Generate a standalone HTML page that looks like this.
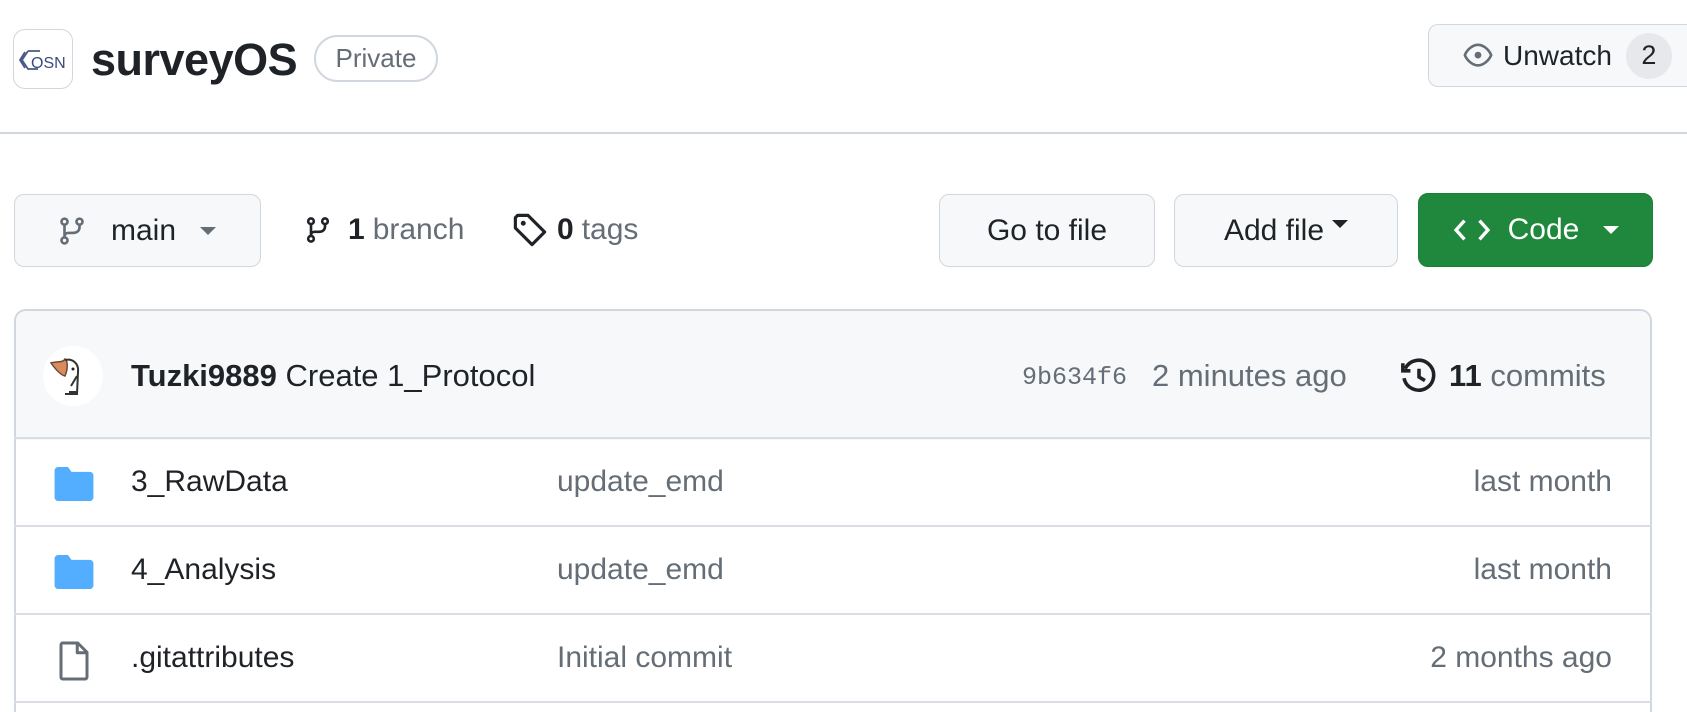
<!DOCTYPE html>
<html style="height:712px;overflow:hidden"><head><meta charset="utf-8"><style>
*{box-sizing:border-box;margin:0;padding:0}
body{width:1687px;height:712px;overflow:hidden;background:#fff;font-family:"Liberation Sans",sans-serif;color:#1f2328;position:relative}
.a{position:absolute}
.btn{position:absolute;border:1px solid #d0d7de;background:#f6f8fa;border-radius:10px;display:flex;align-items:center;font-size:29px;color:#1f2328}
.muted{color:#656d76}
.row{position:absolute;left:14px;width:1638px;height:88px;border-top:2px solid #d8dee4;font-size:29px}
.row span{position:absolute;top:50%;transform:translateY(-50%)}
.caret{display:inline-block;width:0;height:0;border-left:8px solid transparent;border-right:8px solid transparent;border-top:8px solid currentColor}
</style></head><body>
<div class="a" style="left:13px;top:29px;width:60px;height:60px;border:1px solid #d0d7de;border-radius:12px;background:#fff;overflow:hidden">
<svg width="60" height="60" viewBox="0 0 60 60"><path d="M14 21 L8 30 L14 39 L24 39 M14 21 L26 21 M11 22 L6 30 L11 38" fill="none" stroke="#4a5a8a" stroke-width="1.8"/><text x="17" y="38" font-family="Liberation Sans" font-size="16" fill="#3b4a7a">OSN</text></svg></div>
<div class="a" style="left:91px;top:34px;font-size:45px;font-weight:bold;letter-spacing:-0.5px">surveyOS</div>
<div class="a" style="left:314px;top:35px;width:124px;height:47px;border:2px solid #d0d7de;border-radius:24px;font-size:26px;color:#656d76;display:flex;align-items:center;justify-content:center">Private</div>
<div class="btn" style="left:1428px;top:24px;width:259px;height:63px;padding-left:30px;border-right:none;border-radius:10px 0 0 10px">
<svg width="38" height="30" viewBox="0 0 16 16"><path d="M8 2c1.98 0 3.6 1.07 4.8 2.23C13.9 5.36 14.7 6.6 15 7.5c-.3.9-1.1 2.14-2.2 3.27C11.6 11.930 9.98 13 8 13s-3.6-1.07-4.8-2.23C2.1 9.64 1.3 8.4 1 7.5c.3-.9 1.1-2.14 2.2-3.27C4.4 3.07 6.02 2 8 2Z" fill="none" stroke="#656d76" stroke-width="1.4"/><circle cx="8" cy="7.5" r="1.8" fill="#656d76"/></svg>
<span style="margin-left:6px;font-size:28px">Unwatch</span>
<span style="margin-left:14px;width:46px;height:46px;border-radius:23px;background:#e6e8eb;display:flex;align-items:center;justify-content:center;font-size:27px">2</span></div>
<div class="a" style="left:0;top:132px;width:1687px;height:2px;background:#d0d7de"></div>
<div class="btn" style="left:14px;top:194px;width:247px;height:73px;padding-left:42px">
<svg width="30" height="36" viewBox="0 0 16 16"><g fill="none" stroke="#656d76" stroke-width="1.4"><circle cx="4" cy="3" r="1.6"/><circle cx="4" cy="13" r="1.6"/><circle cx="12" cy="3" r="1.6"/><path d="M4 4.6v6.8M12 4.6v1.4c0 2-1.5 3-3.5 3H6c-1.2 0-2 .8-2 2"/></g></svg>
<span style="margin-left:24px;font-size:30px">main</span><span class="caret" style="margin-left:24px;color:#656d76"></span></div>
<div class="a" style="left:304px;top:212px;display:flex;align-items:center;font-size:30px">
<svg width="28" height="36" viewBox="0 0 16 16"><g fill="none" stroke="#1f2328" stroke-width="1.5"><circle cx="4" cy="3" r="1.6"/><circle cx="4" cy="13" r="1.6"/><circle cx="12" cy="3" r="1.6"/><path d="M4 4.6v6.8M12 4.6v1.4c0 2-1.5 3-3.5 3H6c-1.2 0-2 .8-2 2"/></g></svg>
<b style="margin-left:16px">1</b><span class="muted" style="margin-left:8px">branch</span></div>
<div class="a" style="left:512px;top:212px;display:flex;align-items:center;font-size:30px">
<svg width="36" height="36" viewBox="0 0 16 16"><path d="M1.5 2.5v4.6l7.4 7.4 5.6-5.6-7.4-7.4H2.5z" fill="none" stroke="#1f2328" stroke-width="1.4" stroke-linejoin="round"/><circle cx="5" cy="5" r="1.1" fill="#1f2328"/></svg>
<b style="margin-left:9px">0</b><span class="muted" style="margin-left:8px">tags</span></div>
<div class="btn" style="left:939px;top:194px;width:216px;height:73px;justify-content:center;font-size:30px">Go to file</div>
<div class="btn" style="left:1174px;top:194px;width:224px;height:73px;justify-content:center;font-size:30px">Add file<span class="caret" style="margin-left:8px;margin-top:-14px"></span></div>
<div class="btn" style="left:1418px;top:193px;width:235px;height:74px;background:#1f883d;border-color:#1a7f37;color:#fff;justify-content:center;font-size:30px">
<svg width="40" height="30" viewBox="0 0 20 16"><path d="M6 3L1.5 8 6 13M14 3l4.5 5L14 13" fill="none" stroke="#fff" stroke-width="1.8"/></svg>
<span style="margin-left:16px">Code</span><span class="caret" style="margin-left:24px"></span></div>
<div class="a" style="left:14px;top:309px;width:1638px;height:403px;border:2px solid #d0d7de;border-bottom:none;border-radius:12px 12px 0 0;overflow:hidden">
<div style="height:129px;background:#f6f8fa"></div></div>
<div class="a" style="left:43px;top:346px;width:60px;height:60px;border-radius:30px;background:#fff;overflow:hidden">
<svg width="60" height="60" viewBox="0 0 60 60"><path d="M8 17c6-2 12 0 14-4 3 2 3 10 0 17-4-1-9-6-14-13z" fill="#d98b5c" stroke="#6b4a3a" stroke-width="1.5"/><path d="M22 14c8-2 14 4 13 12l-1 22H22" fill="none" stroke="#333" stroke-width="2"/><path d="M28 40l6-10M26 46h8" stroke="#333" stroke-width="2"/><circle cx="30" cy="23" r="1.5" fill="#222"/></svg></div>
<div class="a" style="left:131px;top:358px;font-size:31px"><b>Tuzki9889</b> Create 1_Protocol</div>
<div class="a muted" style="left:1022px;top:363px;font-family:'Liberation Mono',monospace;font-size:25px">9b634f6</div>
<div class="a muted" style="left:1152px;top:358px;font-size:31px">2 minutes ago</div>
<svg class="a" style="left:1400px;top:358px" width="38" height="38" viewBox="0 0 16 16"><path d="M2.2 4.5A6.3 6.3 0 1 1 1.7 8.5" fill="none" stroke="#1f2328" stroke-width="1.5"/><path d="M1.2 2.2v3.2h3.2" fill="none" stroke="#1f2328" stroke-width="1.5"/><path d="M8 4.5V8l2.5 1.5" fill="none" stroke="#1f2328" stroke-width="1.5"/></svg>
<div class="a" style="left:1449px;top:358px;font-size:31px"><b>11</b> <span class="muted">commits</span></div>
<div class="row" style="top:437px">
<svg style="position:absolute;left:40px;top:28px" width="40" height="34" viewBox="0 0 16 14"><path d="M0 1.5C0 .7.7 0 1.5 0h4l1.5 2h7.5c.8 0 1.5.7 1.5 1.5v9c0 .8-.7 1.5-1.5 1.5h-13C.7 14 0 13.3 0 12.5z" fill="#54aeff"/></svg>
<span style="left:117px;font-size:30px">3_RawData</span><span class="muted" style="left:543px;font-size:30px">update_emd</span><span class="muted" style="right:40px;font-size:30px">last month</span></div>
<div class="row" style="top:525px">
<svg style="position:absolute;left:40px;top:28px" width="40" height="34" viewBox="0 0 16 14"><path d="M0 1.5C0 .7.7 0 1.5 0h4l1.5 2h7.5c.8 0 1.5.7 1.5 1.5v9c0 .8-.7 1.5-1.5 1.5h-13C.7 14 0 13.3 0 12.5z" fill="#54aeff"/></svg>
<span style="left:117px;font-size:30px">4_Analysis</span><span class="muted" style="left:543px;font-size:30px">update_emd</span><span class="muted" style="right:40px;font-size:30px">last month</span></div>
<div class="row" style="top:613px">
<svg style="position:absolute;left:44px;top:26px" width="32" height="40" viewBox="0 0 12 16"><path d="M1.5.8h6l3.7 3.7v9.9c0 .5-.4.8-.8.8H1.5c-.4 0-.7-.3-.7-.8V1.6c0-.5.3-.8.7-.8zM7.3.8v3.9h3.9" fill="none" stroke="#656d76" stroke-width="1.2" stroke-linejoin="round"/></svg>
<span style="left:117px;font-size:30px">.gitattributes</span><span class="muted" style="left:543px;font-size:30px">Initial commit</span><span class="muted" style="right:40px;font-size:30px">2 months ago</span></div>
<div class="row" style="top:701px;height:11px"></div>
</body></html>
